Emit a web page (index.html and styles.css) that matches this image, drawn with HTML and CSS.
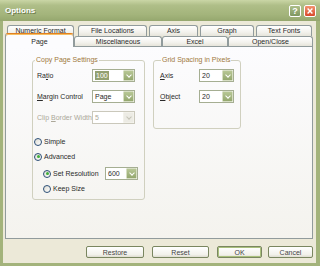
FILE: index.html
```html
<!DOCTYPE html>
<html lang="en">
<head>
    <meta charset="UTF-8">
    <meta name="viewport" content="width=device-width, initial-scale=1.0">
    <title>Options</title>
    <link rel="stylesheet" href="styles.css">
</head>
<body>
    <div class="window">
        <div class="titlebar">
            <span class="title">Options</span>
            <span class="caption-btn help">?</span>
            <span class="caption-btn close">
                <svg viewBox="0 0 10 10" width="8" height="8"><path d="M2 2 L8 8 M8 2 L2 8" stroke="#fff" stroke-width="1.8" fill="none"/></svg>
            </span>
        </div>

        <div class="client">
            <!-- back row of tabs -->
            <div class="tab-row back">
                <div class="tab t-numeric">Numeric Format</div>
                <div class="tab t-files">File Locations</div>
                <div class="tab t-axis">Axis</div>
                <div class="tab t-graph">Graph</div>
                <div class="tab t-fonts">Text Fonts</div>
            </div>
            <!-- front row, Page is selected -->
            <div class="tab-row front">
                <div class="tab active t-page">Page</div>
                <div class="tab t-misc">Miscellaneous</div>
                <div class="tab t-excel">Excel</div>
                <div class="tab t-open">Open/Close</div>
            </div>

            <div class="panel">
                <fieldset class="group copy">
                    <legend>Copy Page Settings</legend>
                    <div class="field">
                        <span class="lbl">Ra<u>t</u>io</span>
                        <div class="combo w43"><span class="value"><span class="sel">100</span></span><span class="drop"></span></div>
                    </div>
                    <div class="field">
                        <span class="lbl"><u>M</u>argin Control</span>
                        <div class="combo w43"><span class="value">Page</span><span class="drop"></span></div>
                    </div>
                    <div class="field">
                        <span class="lbl muted">Clip <u>B</u>order Width</span>
                        <div class="combo w43 disabled"><span class="value">5</span><span class="drop"></span></div>
                    </div>

                    <div class="opt first">
                        <span class="radio"></span><span class="opt-text">Simple</span>
                    </div>
                    <div class="opt">
                        <span class="radio checked"></span><span class="opt-text">Advanced</span>
                    </div>
                    <div class="sub">
                        <div class="opt">
                            <span class="radio checked"></span><span class="opt-text res">Set Resolution</span>
                            <div class="combo w33"><span class="value">600</span><span class="drop"></span></div>
                        </div>
                        <div class="opt">
                            <span class="radio"></span><span class="opt-text">Keep Size</span>
                        </div>
                    </div>
                </fieldset>

                <fieldset class="group grid">
                    <legend>Grid Spacing in Pixels</legend>
                    <div class="field">
                        <span class="lbl"><u>A</u>xis</span>
                        <div class="combo w35"><span class="value">20</span><span class="drop"></span></div>
                    </div>
                    <div class="field">
                        <span class="lbl"><u>O</u>bject</span>
                        <div class="combo w35"><span class="value">20</span><span class="drop"></span></div>
                    </div>
                </fieldset>
            </div>

            <div class="buttons">
                <button class="btn b-restore">Restore</button>
                <button class="btn b-reset">Reset</button>
                <button class="btn b-ok">OK</button>
                <button class="btn b-cancel">Cancel</button>
            </div>
        </div>
    </div>
</body>
</html>
```

FILE: styles.css
```css
* {
    box-sizing: border-box;
}

body {
    margin: 0;
    font-family: "Liberation Sans", Arial, sans-serif;
    font-size: 7px;
    color: #2A2A2A;
    background-color: #fff;
}

.window {
    width: 320px;
    height: 266px;
    display: flex;
    flex-direction: column;
    background-color: #A3B37B;
}

/* title bar */
.titlebar {
    height: 21px;
    display: flex;
    align-items: center;
    padding: 0 4px 0 5px;
    background: linear-gradient(#CAD6A6, #AFBE88 25%, #A3B47B 70%, #95A76E);
}

.title {
    flex: 1;
    color: #fff;
    font-weight: bold;
    font-size: 8px;
    text-shadow: 1px 1px 0 #6F7D4F;
}

.caption-btn {
    width: 12px;
    height: 12px;
    margin-left: 3px;
    border: 1px solid #fff;
    border-radius: 2px;
    display: flex;
    align-items: center;
    justify-content: center;
    color: #fff;
    font-weight: bold;
    font-size: 9px;
}

.help {
    background: linear-gradient(#ADBE8A, #7E965F);
}

.close {
    background: linear-gradient(#F29470, #D9482C);
}

/* client area */
.client {
    flex: 1;
    margin: 0 4px 3px 3px;
    padding: 4px 3px 0 2px;
    background-color: #ECE9D8;
    display: flex;
    flex-direction: column;
}

.tab-row {
    display: flex;
}

.tab-row.back {
    height: 11px;
    padding-left: 2px;
}

.tab-row.front {
    height: 10px;
}

.tab {
    height: 100%;
    border: 1px solid #919B9C;
    border-bottom: none;
    border-radius: 3px 3px 0 0;
    background: linear-gradient(#FFFFFF, #F3F2ED 60%, #E6E4DA);
    display: flex;
    align-items: center;
    justify-content: center;
    white-space: nowrap;
}

.tab-row.back .tab {
    align-items: flex-start;
    padding-top: 1px;
    line-height: 7px;
}

.tab.active {
    height: 14px;
    margin-top: -3px;
    padding-top: 1px;
    position: relative;
    z-index: 1;
    border-top: 1px solid #E3811F;
    box-shadow: inset 0 1px 0 #F5BE64;
    background: #FCFCFE;
}

.t-numeric { width: 67px; }
.t-files { width: 69px; margin-left: 4px; }
.t-axis { width: 49px; margin-left: 2px; }
.t-graph { width: 54px; margin-left: 2px; }
.t-fonts { width: 56px; margin-left: 2px; }

.t-page { width: 69px; }
.t-misc { width: 88px; }
.t-excel { width: 66px; }
.t-open { width: 85px; }

/* tab page */
.panel {
    height: 193px;
    border: 1px solid #919B9C;
    background: linear-gradient(#FCFCFE, #F4F3EE);
    padding: 9px 0 0 26px;
    display: flex;
    align-items: flex-start;
    gap: 8px;
}

.group {
    margin: 0;
    padding: 5px 0 3px 1px;
    min-width: 0;
    border: 1px solid #D0D0BF;
    border-radius: 3px;
}

.group legend {
    padding: 0 1px;
    margin-left: 1px;
    line-height: 8px;
    color: #A0783C;
}

.copy {
    width: 113px;
}

.grid {
    width: 88px;
    padding-left: 6px;
    padding-bottom: 25px;
}

.field {
    display: flex;
    align-items: center;
    height: 13px;
}

.field + .field {
    margin-top: 8px;
}

.copy .lbl {
    width: 58px;
    padding-left: 3px;
}

.grid .lbl {
    width: 39px;
}

.muted {
    color: #ACA899;
}

/* combo boxes */
.combo {
    height: 13px;
    display: flex;
    border: 1px solid #A5AE92;
    background-color: #fff;
}

.w43 { width: 43px; }
.w35 { width: 35px; }
.w33 { width: 33px; }

.combo .value {
    flex: 1;
    display: flex;
    align-items: center;
    padding-left: 2px;
}

.combo .sel {
    background-color: #93A070;
    color: #fff;
    padding: 0 1px;
    line-height: 9px;
}

.drop {
    width: 11px;
    border: 1px solid #D6DEC2;
    border-radius: 1px;
    background: linear-gradient(#B7C795, #94A76E);
    display: flex;
    align-items: center;
    justify-content: center;
}

.drop::after {
    content: "";
    width: 3px;
    height: 3px;
    border-right: 1.5px solid #fff;
    border-bottom: 1.5px solid #fff;
    transform: translateY(-1px) rotate(45deg);
}

.combo.disabled {
    border-color: #CAC8BB;
    color: #ACA899;
}

.combo.disabled .drop {
    border-color: #F2F1EA;
    background: #ECEBE4;
}

.combo.disabled .drop::after {
    border-color: #C4C3B6;
}

/* radio options */
.opt {
    display: flex;
    align-items: center;
    height: 15px;
}

.opt.first {
    margin-top: 10px;
}

.sub {
    margin: 2px 0 0 9px;
}

.radio {
    width: 8px;
    height: 8px;
    border: 1px solid #2C4F77;
    border-radius: 50%;
    background: linear-gradient(135deg, #DCDBD2, #FFFFFF);
    display: flex;
    align-items: center;
    justify-content: center;
}

.radio.checked::after {
    content: "";
    width: 3px;
    height: 3px;
    border-radius: 50%;
    background-color: #3FAE3A;
}

.opt-text {
    margin-left: 2px;
}

.opt-text.res {
    width: 52px;
}

/* dialog buttons */
.buttons {
    display: flex;
    justify-content: flex-end;
    margin-top: 7px;
}

.btn {
    height: 12px;
    padding: 0;
    border: 1px solid #7A8660;
    border-radius: 2px;
    background: linear-gradient(#FFFFFF, #F2F1EB 75%, #DEDCD0);
    font-family: inherit;
    font-size: 7px;
    color: #444;
}

.b-restore { width: 58px; }
.b-reset { width: 57px; margin-left: 8px; }
.b-ok {
    width: 45px;
    margin-left: 8px;
    box-shadow: inset 0 0 0 1px #A9C07C;
}
.b-cancel { width: 45px; margin-left: 6px; }
```
